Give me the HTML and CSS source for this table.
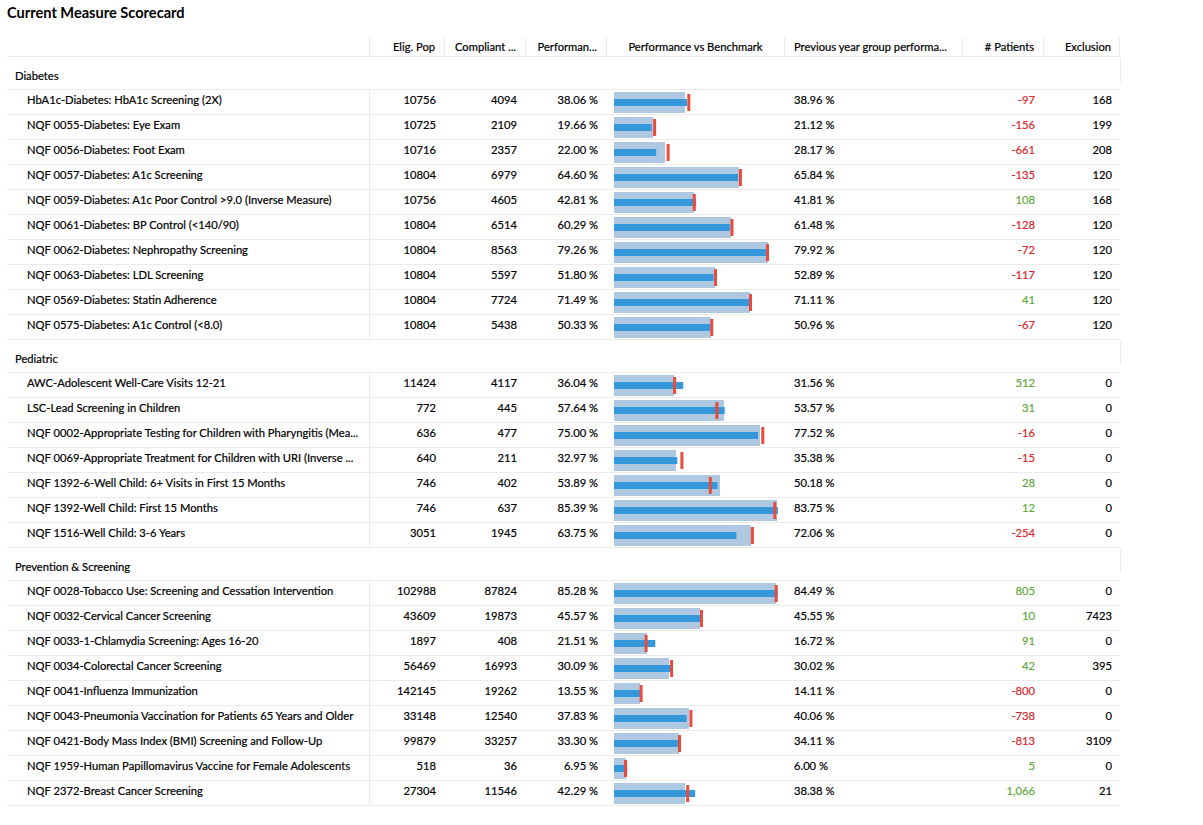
FILE: index.html
```html
<!DOCTYPE html>
<html lang="en">
<head>
<meta charset="utf-8">
<title>Current Measure Scorecard</title>
<link rel="stylesheet" href="styles.css">
</head>
<body>
<div class="title">Current Measure Scorecard</div>
<div class="grid">
  <div class="row head">
    <div class="c name"></div>
    <div class="c num">Elig. Pop</div>
    <div class="c num">Compliant ...</div>
    <div class="c num">Performan...</div>
    <div class="c center">Performance vs Benchmark</div>
    <div class="c prev">Previous year group performa...</div>
    <div class="c num">&#35; Patients</div>
    <div class="c num last">Exclusion</div>
  </div>

  <div class="row group"><div class="gname">Diabetes</div></div>
  <div class="row data"><div class="c name">HbA1c-Diabetes: HbA1c Screening (2X)</div><div class="c num">10756</div><div class="c num">4094</div><div class="c num">38.06 %</div><div class="c chart"><svg width="170" height="24"><rect class="bg" x="0" y="2" width="71" height="21"/><rect class="bar" x="0" y="9" width="73" height="7"/><rect class="mk" x="73.3" y="4" width="3" height="17"/></svg></div><div class="c prev">38.96 %</div><div class="c num neg">-97</div><div class="c num last">168</div></div>
  <div class="row data"><div class="c name">NQF 0055-Diabetes: Eye Exam</div><div class="c num">10725</div><div class="c num">2109</div><div class="c num">19.66 %</div><div class="c chart"><svg width="170" height="24"><rect class="bg" x="0" y="2" width="39" height="21"/><rect class="bar" x="0" y="9" width="37.7" height="7"/><rect class="mk" x="39.1" y="4" width="3" height="17"/></svg></div><div class="c prev">21.12 %</div><div class="c num neg">-156</div><div class="c num last">199</div></div>
  <div class="row data"><div class="c name">NQF 0056-Diabetes: Foot Exam</div><div class="c num">10716</div><div class="c num">2357</div><div class="c num">22.00 %</div><div class="c chart"><svg width="170" height="24"><rect class="bg" x="0" y="2" width="51" height="21"/><rect class="bar" x="0" y="9" width="42.2" height="7"/><rect class="mk" x="52.6" y="4" width="3" height="17"/></svg></div><div class="c prev">28.17 %</div><div class="c num neg">-661</div><div class="c num last">208</div></div>
  <div class="row data"><div class="c name">NQF 0057-Diabetes: A1c Screening</div><div class="c num">10804</div><div class="c num">6979</div><div class="c num">64.60 %</div><div class="c chart"><svg width="170" height="24"><rect class="bg" x="0" y="2" width="125" height="21"/><rect class="bar" x="0" y="9" width="124" height="7"/><rect class="mk" x="124.9" y="4" width="3" height="17"/></svg></div><div class="c prev">65.84 %</div><div class="c num neg">-135</div><div class="c num last">120</div></div>
  <div class="row data"><div class="c name">NQF 0059-Diabetes: A1c Poor Control &gt;9.0 (Inverse Measure)</div><div class="c num">10756</div><div class="c num">4605</div><div class="c num">42.81 %</div><div class="c chart"><svg width="170" height="24"><rect class="bg" x="0" y="2" width="80" height="21"/><rect class="bar" x="0" y="9" width="82.2" height="7"/><rect class="mk" x="78.8" y="4" width="3" height="17"/></svg></div><div class="c prev">41.81 %</div><div class="c num pos">108</div><div class="c num last">168</div></div>
  <div class="row data"><div class="c name">NQF 0061-Diabetes: BP Control (&lt;140/90)</div><div class="c num">10804</div><div class="c num">6514</div><div class="c num">60.29 %</div><div class="c chart"><svg width="170" height="24"><rect class="bg" x="0" y="2" width="117" height="21"/><rect class="bar" x="0" y="9" width="115.8" height="7"/><rect class="mk" x="116.5" y="4" width="3" height="17"/></svg></div><div class="c prev">61.48 %</div><div class="c num neg">-128</div><div class="c num last">120</div></div>
  <div class="row data"><div class="c name">NQF 0062-Diabetes: Nephropathy Screening</div><div class="c num">10804</div><div class="c num">8563</div><div class="c num">79.26 %</div><div class="c chart"><svg width="170" height="24"><rect class="bg" x="0" y="2" width="154" height="21"/><rect class="bar" x="0" y="9" width="152.2" height="7"/><rect class="mk" x="152" y="4" width="3" height="17"/></svg></div><div class="c prev">79.92 %</div><div class="c num neg">-72</div><div class="c num last">120</div></div>
  <div class="row data"><div class="c name">NQF 0063-Diabetes: LDL Screening</div><div class="c num">10804</div><div class="c num">5597</div><div class="c num">51.80 %</div><div class="c chart"><svg width="170" height="24"><rect class="bg" x="0" y="2" width="101" height="21"/><rect class="bar" x="0" y="9" width="99.5" height="7"/><rect class="mk" x="100" y="4" width="3" height="17"/></svg></div><div class="c prev">52.89 %</div><div class="c num neg">-117</div><div class="c num last">120</div></div>
  <div class="row data"><div class="c name">NQF 0569-Diabetes: Statin Adherence</div><div class="c num">10804</div><div class="c num">7724</div><div class="c num">71.49 %</div><div class="c chart"><svg width="170" height="24"><rect class="bg" x="0" y="2" width="136" height="21"/><rect class="bar" x="0" y="9" width="137.3" height="7"/><rect class="mk" x="135" y="4" width="3" height="17"/></svg></div><div class="c prev">71.11 %</div><div class="c num pos">41</div><div class="c num last">120</div></div>
  <div class="row data"><div class="c name">NQF 0575-Diabetes: A1c Control (&lt;8.0)</div><div class="c num">10804</div><div class="c num">5438</div><div class="c num">50.33 %</div><div class="c chart"><svg width="170" height="24"><rect class="bg" x="0" y="2" width="97" height="21"/><rect class="bar" x="0" y="9" width="96.6" height="7"/><rect class="mk" x="96.3" y="4" width="3" height="17"/></svg></div><div class="c prev">50.96 %</div><div class="c num neg">-67</div><div class="c num last">120</div></div>

  <div class="row group"><div class="gname">Pediatric</div></div>
  <div class="row data"><div class="c name">AWC-Adolescent Well-Care Visits 12-21</div><div class="c num">11424</div><div class="c num">4117</div><div class="c num">36.04 %</div><div class="c chart"><svg width="170" height="24"><rect class="bg" x="0" y="2" width="60" height="21"/><rect class="bar" x="0" y="9" width="69.2" height="7"/><rect class="mk" x="59.1" y="4" width="3" height="17"/></svg></div><div class="c prev">31.56 %</div><div class="c num pos">512</div><div class="c num last">0</div></div>
  <div class="row data"><div class="c name">LSC-Lead Screening in Children</div><div class="c num">772</div><div class="c num">445</div><div class="c num">57.64 %</div><div class="c chart"><svg width="170" height="24"><rect class="bg" x="0" y="2" width="110" height="21"/><rect class="bar" x="0" y="9" width="110.7" height="7"/><rect class="mk" x="101.4" y="4" width="3" height="17"/></svg></div><div class="c prev">53.57 %</div><div class="c num pos">31</div><div class="c num last">0</div></div>
  <div class="row data"><div class="c name">NQF 0002-Appropriate Testing for Children with Pharyngitis (Mea...</div><div class="c num">636</div><div class="c num">477</div><div class="c num">75.00 %</div><div class="c chart"><svg width="170" height="24"><rect class="bg" x="0" y="2" width="146" height="21"/><rect class="bar" x="0" y="9" width="144" height="7"/><rect class="mk" x="147.3" y="4" width="3" height="17"/></svg></div><div class="c prev">77.52 %</div><div class="c num neg">-16</div><div class="c num last">0</div></div>
  <div class="row data"><div class="c name">NQF 0069-Appropriate Treatment for Children with URI (Inverse ...</div><div class="c num">640</div><div class="c num">211</div><div class="c num">32.97 %</div><div class="c chart"><svg width="170" height="24"><rect class="bg" x="0" y="2" width="62" height="21"/><rect class="bar" x="0" y="9" width="63.3" height="7"/><rect class="mk" x="66.4" y="4" width="3" height="17"/></svg></div><div class="c prev">35.38 %</div><div class="c num neg">-15</div><div class="c num last">0</div></div>
  <div class="row data"><div class="c name">NQF 1392-6-Well Child: 6+ Visits in First 15 Months</div><div class="c num">746</div><div class="c num">402</div><div class="c num">53.89 %</div><div class="c chart"><svg width="170" height="24"><rect class="bg" x="0" y="2" width="106" height="21"/><rect class="bar" x="0" y="9" width="103.5" height="7"/><rect class="mk" x="94.8" y="4" width="3" height="17"/></svg></div><div class="c prev">50.18 %</div><div class="c num pos">28</div><div class="c num last">0</div></div>
  <div class="row data"><div class="c name">NQF 1392-Well Child: First 15 Months</div><div class="c num">746</div><div class="c num">637</div><div class="c num">85.39 %</div><div class="c chart"><svg width="170" height="24"><rect class="bg" x="0" y="2" width="163" height="21"/><rect class="bar" x="0" y="9" width="163.9" height="7"/><rect class="mk" x="159.3" y="4" width="3" height="17"/></svg></div><div class="c prev">83.75 %</div><div class="c num pos">12</div><div class="c num last">0</div></div>
  <div class="row data"><div class="c name">NQF 1516-Well Child: 3-6 Years</div><div class="c num">3051</div><div class="c num">1945</div><div class="c num">63.75 %</div><div class="c chart"><svg width="170" height="24"><rect class="bg" x="0" y="2" width="137" height="21"/><rect class="bar" x="0" y="9" width="122.4" height="7"/><rect class="mk" x="136.9" y="4" width="3" height="17"/></svg></div><div class="c prev">72.06 %</div><div class="c num neg">-254</div><div class="c num last">0</div></div>

  <div class="row group"><div class="gname">Prevention &amp; Screening</div></div>
  <div class="row data"><div class="c name">NQF 0028-Tobacco Use: Screening and Cessation Intervention</div><div class="c num">102988</div><div class="c num">87824</div><div class="c num">85.28 %</div><div class="c chart"><svg width="170" height="24"><rect class="bg" x="0" y="2" width="162" height="21"/><rect class="bar" x="0" y="9" width="163.7" height="7"/><rect class="mk" x="160.7" y="4" width="3" height="17"/></svg></div><div class="c prev">84.49 %</div><div class="c num pos">805</div><div class="c num last">0</div></div>
  <div class="row data"><div class="c name">NQF 0032-Cervical Cancer Screening</div><div class="c num">43609</div><div class="c num">19873</div><div class="c num">45.57 %</div><div class="c chart"><svg width="170" height="24"><rect class="bg" x="0" y="2" width="86" height="21"/><rect class="bar" x="0" y="9" width="87.5" height="7"/><rect class="mk" x="86" y="4" width="3" height="17"/></svg></div><div class="c prev">45.55 %</div><div class="c num pos">10</div><div class="c num last">7423</div></div>
  <div class="row data"><div class="c name">NQF 0033-1-Chlamydia Screening: Ages 16-20</div><div class="c num">1897</div><div class="c num">408</div><div class="c num">21.51 %</div><div class="c chart"><svg width="170" height="24"><rect class="bg" x="0" y="2" width="33" height="21"/><rect class="bar" x="0" y="9" width="41.3" height="7"/><rect class="mk" x="30.6" y="4" width="3" height="17"/></svg></div><div class="c prev">16.72 %</div><div class="c num pos">91</div><div class="c num last">0</div></div>
  <div class="row data"><div class="c name">NQF 0034-Colorectal Cancer Screening</div><div class="c num">56469</div><div class="c num">16993</div><div class="c num">30.09 %</div><div class="c chart"><svg width="170" height="24"><rect class="bg" x="0" y="2" width="55" height="21"/><rect class="bar" x="0" y="9" width="57.8" height="7"/><rect class="mk" x="56.1" y="4" width="3" height="17"/></svg></div><div class="c prev">30.02 %</div><div class="c num pos">42</div><div class="c num last">395</div></div>
  <div class="row data"><div class="c name">NQF 0041-Influenza Immunization</div><div class="c num">142145</div><div class="c num">19262</div><div class="c num">13.55 %</div><div class="c chart"><svg width="170" height="24"><rect class="bg" x="0" y="2" width="26" height="21"/><rect class="bar" x="0" y="9" width="26" height="7"/><rect class="mk" x="25.6" y="4" width="3" height="17"/></svg></div><div class="c prev">14.11 %</div><div class="c num neg">-800</div><div class="c num last">0</div></div>
  <div class="row data"><div class="c name">NQF 0043-Pneumonia Vaccination for Patients 65 Years and Older</div><div class="c num">33148</div><div class="c num">12540</div><div class="c num">37.83 %</div><div class="c chart"><svg width="170" height="24"><rect class="bg" x="0" y="2" width="75" height="21"/><rect class="bar" x="0" y="9" width="72.6" height="7"/><rect class="mk" x="75.4" y="4" width="3" height="17"/></svg></div><div class="c prev">40.06 %</div><div class="c num neg">-738</div><div class="c num last">0</div></div>
  <div class="row data"><div class="c name">NQF 0421-Body Mass Index (BMI) Screening and Follow-Up</div><div class="c num">99879</div><div class="c num">33257</div><div class="c num">33.30 %</div><div class="c chart"><svg width="170" height="24"><rect class="bg" x="0" y="2" width="65" height="21"/><rect class="bar" x="0" y="9" width="63.9" height="7"/><rect class="mk" x="64" y="4" width="3" height="17"/></svg></div><div class="c prev">34.11 %</div><div class="c num neg">-813</div><div class="c num last">3109</div></div>
  <div class="row data"><div class="c name">NQF 1959-Human Papillomavirus Vaccine for Female Adolescents</div><div class="c num">518</div><div class="c num">36</div><div class="c num">6.95 %</div><div class="c chart"><svg width="170" height="24"><rect class="bg" x="0" y="2" width="12" height="21"/><rect class="bar" x="0" y="9" width="13.3" height="7"/><rect class="mk" x="10" y="4" width="3" height="17"/></svg></div><div class="c prev">6.00 %</div><div class="c num pos">5</div><div class="c num last">0</div></div>
  <div class="row data"><div class="c name">NQF 2372-Breast Cancer Screening</div><div class="c num">27304</div><div class="c num">11546</div><div class="c num">42.29 %</div><div class="c chart"><svg width="170" height="24"><rect class="bg" x="0" y="2" width="71" height="21"/><rect class="bar" x="0" y="9" width="81.2" height="7"/><rect class="mk" x="72.2" y="4" width="3" height="17"/></svg></div><div class="c prev">38.38 %</div><div class="c num pos">1,066</div><div class="c num last">21</div></div>
</div>
</body>
</html>
```

FILE: styles.css
```css
* { box-sizing: border-box; }

body {
  margin: 0;
  background: #ffffff;
  color: #000000;
  font-family: Lato, "Noto Sans", "DejaVu Sans", sans-serif;
  font-size: 11.2px;
  -webkit-text-stroke: 0.2px currentColor;
}

.title {
  height: 37px;
  padding: 4px 0 0 7px;
  font-size: 14.6px;
  font-weight: bold;
  line-height: 18px;
  -webkit-text-stroke: 0;
}

.grid {
  margin-left: 7px;
  width: 1113px;
}

.row {
  display: grid;
  grid-template-columns: 363px 75px 81px 81px 178px 178px 81px 76px;
  border-bottom: 1px solid #ebebeb;
}

.head {
  height: 20px;
}

.head .c {
  border-right: 1px solid #ebebeb;
  line-height: 19px;
}

.data {
  height: 25px;
}

.group {
  display: block;
  height: 33px;
  position: relative;
}

.group::after {
  content: "";
  position: absolute;
  right: -1px;
  top: 1px;
  height: 24px;
  border-right: 1px solid #e6ecf7;
}

.gname {
  padding: 12px 0 0 8px;
  line-height: 14px;
}

.c {
  white-space: nowrap;
  overflow: hidden;
  line-height: 20px;
}

.data .name {
  border-right: 1px solid #ebebeb;
  padding-left: 20px;
}

.num {
  text-align: right;
  padding-right: 9px;
}

.num.last {
  padding-right: 8px;
}

.center {
  text-align: center;
}

.prev {
  padding-left: 9px;
}

.chart {
  padding-left: 7px;
  line-height: 0;
}

.chart svg {
  display: block;
}

.bg { fill: #adc8e0; }
.bar { fill: #3598db; }
.mk { fill: #e74c3c; }

.neg { color: #d9262c; }
.pos { color: #5ea83c; }
```
